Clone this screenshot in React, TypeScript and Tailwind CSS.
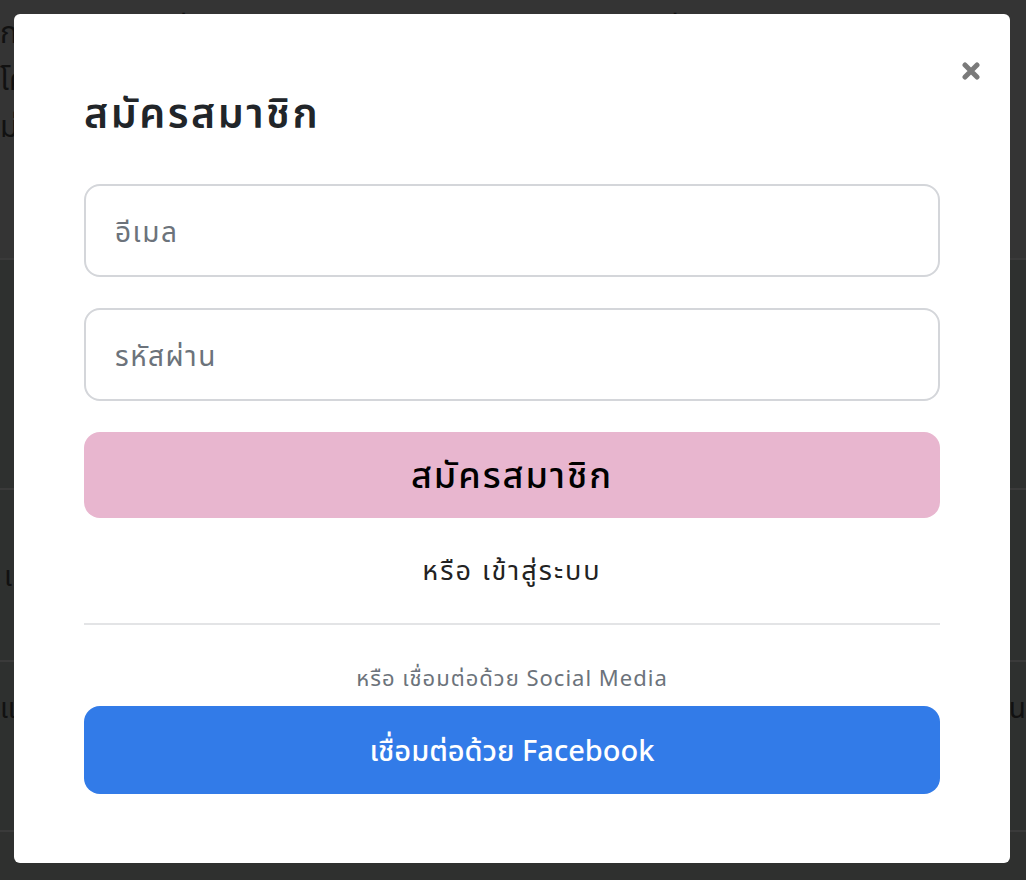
function Backdrop() {
  return (
    <div className="absolute inset-0 flex flex-col bg-[#343434]">
      <div className="h-[260px] border-b-2 border-[#3a3a3a] px-0 pt-2 text-[30px] leading-[47px] text-[#111]">
        <p>การเข้าสู่ระบบเพื่อใช้งานบริการต่าง ๆ ของเว็บไซต์ทั้งหมดที่</p>
        <p>โค</p>
        <p>ม่</p>
      </div>
      <div className="h-[230px] border-b-2 border-[#3a3a3a] bg-[#2e302f]" />
      <div className="flex h-[172px] items-center border-b-2 border-[#3a3a3a] bg-[#2e302f] px-1 text-[28px] text-[#111]">
        <span>เ</span>
      </div>
      <div className="flex h-[170px] items-start justify-between border-b-2 border-[#3a3a3a] bg-[#2e302f] pt-6 text-[28px] text-[#111]">
        <span>และ</span>
        <span>น</span>
      </div>
      <div className="flex-1 bg-[#2f302f]" />
    </div>
  );
}

function CloseIcon() {
  return (
    <svg width="18" height="18" viewBox="0 0 18 18" fill="none">
      <path d="M3 3 L15 15 M15 3 L3 15" stroke="currentColor" strokeWidth="5" strokeLinecap="round" />
    </svg>
  );
}

export default function App() {
  return (
    <div
      className="relative h-[880px] w-full overflow-hidden"
      style={{ fontFamily: "'Noto Sans', 'Noto Sans Thai', sans-serif" }}
    >
      <Backdrop />
      <div className="absolute inset-0 p-[14px] pr-[16px]">
        <div className="relative flex h-[849px] w-[996px] flex-col rounded-md bg-white px-[70px] pt-[72px]">
          <button className="absolute right-[30px] top-[48px] text-[#7a7a7a]">
            <CloseIcon />
          </button>
          <h1 className="text-[41px] font-semibold leading-[52px] tracking-[2.5px] text-[#212529]">สมัครสมาชิก</h1>
          <div className="mt-[46px] flex flex-col gap-[31px]">
            <div className="flex h-[93px] items-center rounded-2xl border-2 border-[#d4d6da] px-[29px] text-[28px] tracking-[1.5px] text-[#6c737b]">
              อีเมล
            </div>
            <div className="flex h-[93px] items-center rounded-2xl border-2 border-[#d4d6da] px-[29px] text-[28px] tracking-[1.5px] text-[#6c737b]">
              รหัสผ่าน
            </div>
          </div>
          <button className="mt-[31px] flex h-[86px] items-center justify-center rounded-2xl bg-[#e8b6cf] text-[36px] font-medium tracking-[2px] text-black">
            สมัครสมาชิก
          </button>
          <p className="mt-[32px] text-center text-[27px] tracking-[2px] text-[#222]">หรือ เข้าสู่ระบบ</p>
          <div className="mt-[32px] h-[2px] bg-[#e3e4e6]" />
          <p className="mt-[36px] text-center text-[22px] tracking-[1px] text-[#6c737b]">หรือ เชื่อมต่อด้วย Social Media</p>
          <button className="mt-[12px] flex h-[88px] items-center justify-center rounded-2xl bg-[#327be8] text-[29px] font-medium text-white">
            เชื่อมต่อด้วย Facebook
          </button>
        </div>
      </div>
    </div>
  );
}
